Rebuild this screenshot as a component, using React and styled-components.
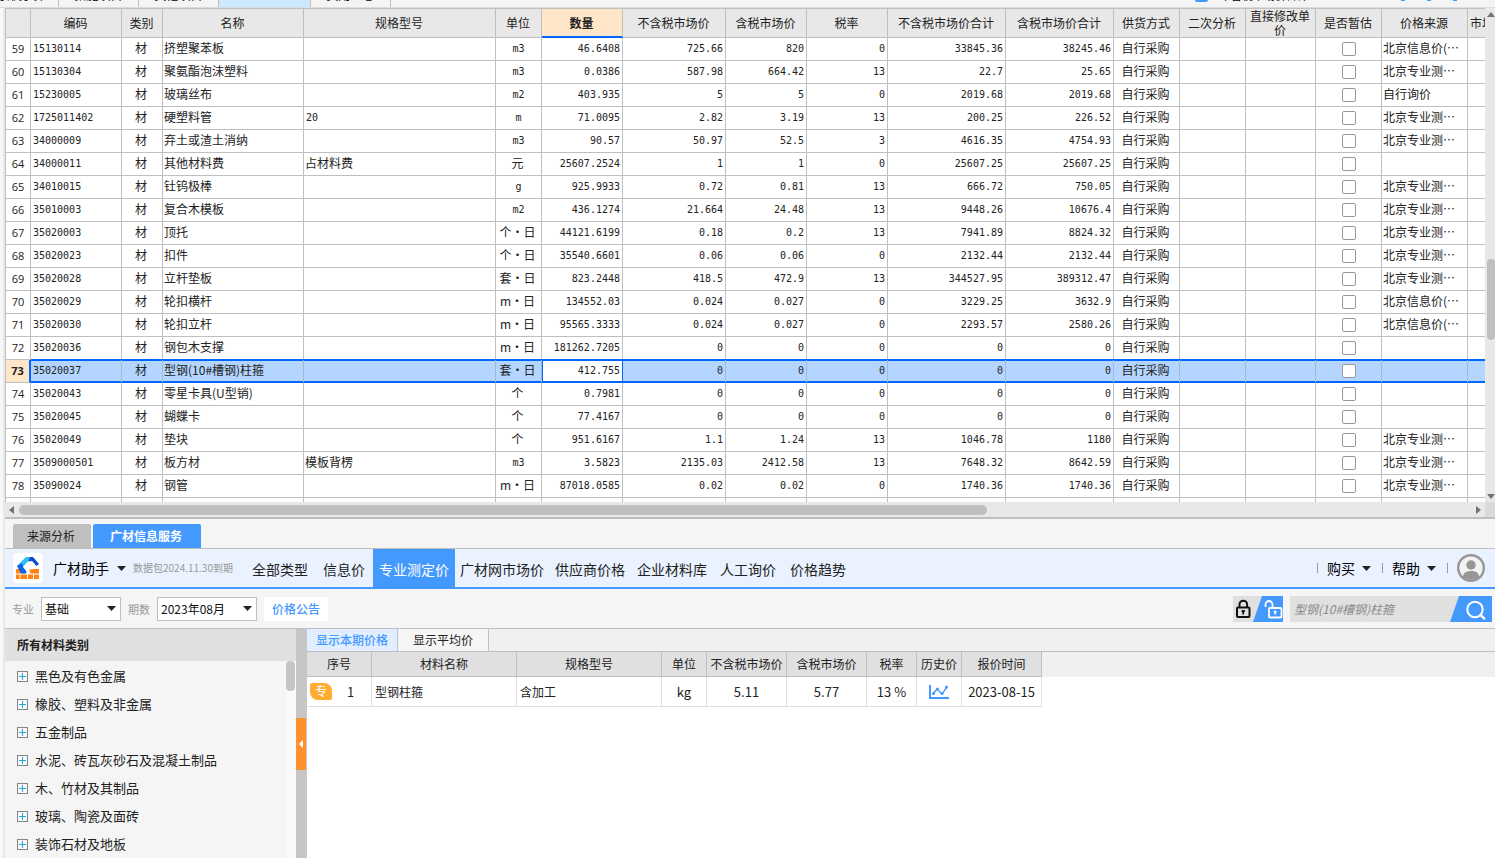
import { useState } from "react";
import styled, { createGlobalStyle, css } from "styled-components";

const BUY = "自行采购";
const PRO = "北京专业测…";
const INFO = "北京信息价(…";

const columns = [
  { title: "", width: 26 },
  { title: "编码", width: 91 },
  { title: "类别", width: 41 },
  { title: "名称", width: 141 },
  { title: "规格型号", width: 192 },
  { title: "单位", width: 46 },
  { title: "数量", width: 81 },
  { title: "不含税市场价", width: 103 },
  { title: "含税市场价", width: 81 },
  { title: "税率", width: 81 },
  { title: "不含税市场价合计", width: 118 },
  { title: "含税市场价合计", width: 108 },
  { title: "供货方式", width: 66 },
  { title: "二次分析", width: 66 },
  { title: "直接修改单价", width: 70 },
  { title: "是否暂估", width: 66 },
  { title: "价格来源", width: 86 },
  { title: "市场价", width: null },
];

// no, code, name, spec, unit, qty, price, price with tax, rate, total, total with tax, source
const rows = [
  [59, "15130114", "挤塑聚苯板", "", "m3", "46.6408", "725.66", "820", "0", "33845.36", "38245.46", INFO],
  [60, "15130304", "聚氨酯泡沫塑料", "", "m3", "0.0386", "587.98", "664.42", "13", "22.7", "25.65", PRO],
  [61, "15230005", "玻璃丝布", "", "m2", "403.935", "5", "5", "0", "2019.68", "2019.68", "自行询价"],
  [62, "1725011402", "硬塑料管", "20", "m", "71.0095", "2.82", "3.19", "13", "200.25", "226.52", PRO],
  [63, "34000009", "弃土或渣土消纳", "", "m3", "90.57", "50.97", "52.5", "3", "4616.35", "4754.93", PRO],
  [64, "34000011", "其他材料费", "占材料费", "元", "25607.2524", "1", "1", "0", "25607.25", "25607.25", ""],
  [65, "34010015", "钍钨极棒", "", "g", "925.9933", "0.72", "0.81", "13", "666.72", "750.05", PRO],
  [66, "35010003", "复合木模板", "", "m2", "436.1274", "21.664", "24.48", "13", "9448.26", "10676.4", PRO],
  [67, "35020003", "顶托", "", "个·日", "44121.6199", "0.18", "0.2", "13", "7941.89", "8824.32", PRO],
  [68, "35020023", "扣件", "", "个·日", "35540.6601", "0.06", "0.06", "0", "2132.44", "2132.44", PRO],
  [69, "35020028", "立杆垫板", "", "套·日", "823.2448", "418.5", "472.9", "13", "344527.95", "389312.47", PRO],
  [70, "35020029", "轮扣横杆", "", "m·日", "134552.03", "0.024", "0.027", "0", "3229.25", "3632.9", INFO],
  [71, "35020030", "轮扣立杆", "", "m·日", "95565.3333", "0.024", "0.027", "0", "2293.57", "2580.26", INFO],
  [72, "35020036", "钢包木支撑", "", "m·日", "181262.7205", "0", "0", "0", "0", "0", ""],
  [73, "35020037", "型钢(10#槽钢)柱箍", "", "套·日", "412.755", "0", "0", "0", "0", "0", ""],
  [74, "35020043", "零星卡具(U型销)", "", "个", "0.7981", "0", "0", "0", "0", "0", ""],
  [75, "35020045", "蝴蝶卡", "", "个", "77.4167", "0", "0", "0", "0", "0", ""],
  [76, "35020049", "垫块", "", "个", "951.6167", "1.1", "1.24", "13", "1046.78", "1180", PRO],
  [77, "3509000501", "板方材", "模板背楞", "m3", "3.5823", "2135.03", "2412.58", "13", "7648.32", "8642.59", PRO],
  [78, "35090024", "钢管", "", "m·日", "87018.0585", "0.02", "0.02", "0", "1740.36", "1740.36", PRO],
];

const topTabs = [
  { text: "分部分项", width: 80 },
  { text: "措施项目", width: 80 },
  { text: "其他项目", width: 80 },
  { text: "", width: 92, active: true },
  { text: "费用汇总", width: 80 },
];

const navItems = [
  { text: "全部类型", width: 70 },
  { text: "信息价", width: 58 },
  { text: "专业测定价", width: 82 },
  { text: "广材网市场价", width: 94 },
  { text: "供应商价格", width: 82 },
  { text: "企业材料库", width: 82 },
  { text: "人工询价", width: 70 },
  { text: "价格趋势", width: 70 },
];

const categories = [
  "黑色及有色金属",
  "橡胶、塑料及非金属",
  "五金制品",
  "水泥、砖瓦灰砂石及混凝土制品",
  "木、竹材及其制品",
  "玻璃、陶瓷及面砖",
  "装饰石材及地板",
];

const priceColumns = [
  ["序号", 65],
  ["材料名称", 145],
  ["规格型号", 145],
  ["单位", 45],
  ["不含税市场价", 80],
  ["含税市场价", 80],
  ["税率", 50],
  ["历史价", 45],
  ["报价时间", 80],
];

const Caret = () => (
  <svg width="9" height="5" viewBox="0 0 9 5">
    <path d="M0 0h9L4.5 5z" fill="#222" />
  </svg>
);

const Logo = () => (
  <svg width="30" height="30" viewBox="0 0 30 30">
    <rect width="30" height="30" rx="4" fill="#fff" />
    <g fill="#ff8412">
      <path d="M3 16h6v4.500H3zM20 16l-3 4.500h9V16z" />
      <path d="M10 18l4 2.500h-4zM14.500 16h5l-2.500 4z" />
      <path d="M3 21.500h3.500V26H3zM7.500 21.500h6.500V26H7.500zM15 21.500h5V26h-5zM21 21.500h5V26h-5z" />
    </g>
    <path d="M13 4h6l-8 9-3 2-4-2z" fill="#2bbdf7" />
    <path d="M4 13l5-3 1 4 4 5-2 1.500H8z" fill="#0b63e8" />
    <path d="M17 4h3l6 7-2.500 2L19 8l-4 1z" fill="#0a4dc8" />
    <path d="M10.500 13.500L15 8.500h3.500l3 4.500-5 6h-2.500z" fill="#fff" />
    <path d="M16 16.500h5l-3 3.500z" fill="#ff8412" />
  </svg>
);

const Avatar = () => (
  <svg width="28" height="28" viewBox="0 0 28 28">
    <circle cx="14" cy="14" r="12.800" fill="#f3f3f3" stroke="#979797" strokeWidth="2.400" />
    <circle cx="14" cy="11" r="4.700" fill="#979797" />
    <path d="M6 23c0-4 3-6 8-6s8 2 8 6c-4 4-12 4-16 0z" fill="#979797" />
  </svg>
);

const Locks = () => (
  <svg width="50" height="26" viewBox="0 0 50 26">
    <path d="M29 0h21v26H20z" fill="#4499ff" />
    <path d="M6.500 12V8.500a3.800 3.800 0 0 1 7.600 0V12" fill="none" stroke="#111" strokeWidth="2" />
    <rect x="4" y="11.500" width="12.500" height="9.500" rx="1" fill="none" stroke="#111" strokeWidth="2" />
    <path d="M10.200 14v4.500M8.500 15.200h3.500" stroke="#111" strokeWidth="1.800" />
    <path d="M32.500 11V8.500a3.500 3.500 0 0 1 7 0V12" fill="none" stroke="#fff" strokeWidth="1.800" />
    <rect x="36" y="12" width="12.500" height="9.500" rx="1" fill="none" stroke="#fff" strokeWidth="1.800" />
    <path d="M42.200 14.500v4M40.700 15.800h3" stroke="#fff" strokeWidth="1.600" />
  </svg>
);

const SearchIcon = () => (
  <svg width="42" height="26" viewBox="0 0 42 26">
    <path d="M9 0h33v26H0z" fill="#4499ff" />
    <circle cx="25" cy="13.500" r="7.700" fill="none" stroke="#fff" strokeWidth="2" />
    <path d="M30.500 19l3.800 3.500" stroke="#fff" strokeWidth="2.400" strokeLinecap="round" />
  </svg>
);

const ChartIcon = () => (
  <svg width="20" height="14" viewBox="0 0 20 14">
    <path d="M1 0v13h19" fill="none" stroke="#4499ff" strokeWidth="2" />
    <path d="M4 9l4-5 5 5 5-7" fill="none" stroke="#4499ff" strokeWidth="1.400" />
    <g fill="#4499ff">
      <circle cx="4.500" cy="8.500" r="1.500" />
      <circle cx="8.500" cy="4" r="1.500" />
      <circle cx="13" cy="8.500" r="1.500" />
      <circle cx="17.500" cy="2" r="1.500" />
    </g>
  </svg>
);

const PlusBox = () => (
  <svg width="11" height="11" viewBox="0 0 11 11">
    <rect x="0.500" y="0.500" width="10" height="10" fill="#fafafa" stroke="#858585" />
    <path d="M2 5.500h7M5.500 2v7" stroke="#25a5d8" />
  </svg>
);

const App = () => {
  const [selected, setSelected] = useState(73);
  const [nav, setNav] = useState("专业测定价");

  return (
    <Page>
      <GlobalStyle />
      <TopStrip>
        {topTabs.map((t, i) => (
          <TopTab key={i} $width={t.width} $active={t.active}>
            {t.text}
          </TopTab>
        ))}
        <TopTools>
          <TopCheck />
          不含税市场价合计:
          <TopMarks>
            <TopMark />
            <TopMark />
            <TopMark />
          </TopMarks>
        </TopTools>
      </TopStrip>

      <Grid>
        <GridScroll>
          <Sheet>
            <colgroup>
              {columns.map((c, i) => (
                <col key={i} width={c.width || undefined} />
              ))}
            </colgroup>
            <thead>
              <tr>
                {columns.map((c, i) => (
                  <HeadCell key={i} $active={c.title === "数量"} $clip={!c.width}>
                    {c.title}
                  </HeadCell>
                ))}
              </tr>
            </thead>
            <tbody>
              {rows.map((r) => (
                <Row key={r[0]} $selected={r[0] === selected} onClick={() => setSelected(r[0])}>
                  <NumberCell>{r[0]}</NumberCell>
                  <Cell $mono>{r[1]}</Cell>
                  <Cell $align="center">材</Cell>
                  <Cell>{r[2]}</Cell>
                  <Cell $mono={r[3] === "20"}>{r[3]}</Cell>
                  <Cell $align="center" $mono={/^[a-z0-9]+$/.test(r[4])}>{r[4]}</Cell>
                  <QtyCell $mono $align="right">{r[5]}</QtyCell>
                  <Cell $mono $align="right">{r[6]}</Cell>
                  <Cell $mono $align="right">{r[7]}</Cell>
                  <Cell $mono $align="right">{r[8]}</Cell>
                  <Cell $mono $align="right">{r[9]}</Cell>
                  <Cell $mono $align="right">{r[10]}</Cell>
                  <Cell $align="center">{BUY}</Cell>
                  <Cell />
                  <Cell />
                  <Cell $mono $align="center">
                    <Check type="checkbox" aria-label="是否暂估" />
                  </Cell>
                  <Cell>{r[11]}</Cell>
                  <Cell />
                </Row>
              ))}
              <tr>
                {columns.map((c, i) => (
                  <StubCell key={i} />
                ))}
              </tr>
            </tbody>
          </Sheet>
        </GridScroll>
        <VBar>
          <svg width="8" height="5" viewBox="0 0 8 5"><path d="M0 5h8L4 0z" fill="#6f7278" /></svg>
          <VTrack><VThumb /></VTrack>
          <svg width="8" height="5" viewBox="0 0 8 5"><path d="M0 0h8L4 5z" fill="#6f7278" /></svg>
        </VBar>
      </Grid>
      <HBar>
        <HTrack>
          <svg width="5" height="8" viewBox="0 0 5 8"><path d="M5 0v8L0 4z" fill="#6f7278" /></svg>
          <HRail><HThumb /></HRail>
          <svg width="5" height="8" viewBox="0 0 5 8"><path d="M0 0v8l5-4z" fill="#6f7278" /></svg>
        </HTrack>
        <Corner />
      </HBar>

      <ServiceTabs>
        <ServiceTab $width={78}>来源分析</ServiceTab>
        <ServiceTab $width={108} $active>广材信息服务</ServiceTab>
      </ServiceTabs>

      <NavBar>
        <Logo />
        <Brand>
          广材助手
          <Caret />
        </Brand>
        <Expiry>数据包2024.11.30到期</Expiry>
        <NavList>
          {navItems.map((n) => (
            <NavItem
              key={n.text}
              $width={n.width}
              $active={n.text === nav}
              onClick={() => setNav(n.text)}
            >
              {n.text}
            </NavItem>
          ))}
        </NavList>
        <UserArea>
          <Divider />
          <MenuButton>购买 <Caret /></MenuButton>
          <Divider />
          <MenuButton>帮助 <Caret /></MenuButton>
          <Divider />
          <AvatarButton aria-label="用户"><Avatar /></AvatarButton>
        </UserArea>
      </NavBar>

      <Filters>
        <Label htmlFor="major">专业</Label>
        <SelectBox $width={80}>
          <Select id="major">
            <option>基础</option>
          </Select>
          <Caret />
        </SelectBox>
        <Label htmlFor="period">期数</Label>
        <SelectBox $width={100}>
          <Select id="period">
            <option>2023年08月</option>
          </Select>
          <Caret />
        </SelectBox>
        <NoticeButton>价格公告</NoticeButton>
        <LockButton aria-label="锁定"><Locks /></LockButton>
        <SearchBox>
          <SearchInput aria-label="搜索" placeholder="型钢(10#槽钢)柱箍" />
          <SearchButton aria-label="搜索"><SearchIcon /></SearchButton>
        </SearchBox>
      </Filters>

      <Bottom>
        <Side>
          <SideTitle>所有材料类别</SideTitle>
          <TreeArea>
            <Tree>
              {categories.map((c) => (
                <TreeItem key={c}>
                  <PlusBox />
                  {c}
                </TreeItem>
              ))}
            </Tree>
            <TreeBar><TreeThumb /></TreeBar>
          </TreeArea>
        </Side>
        <Splitter>
          <Collapse aria-label="收起">
            <svg width="4" height="8" viewBox="0 0 4 8"><path d="M4 0v8L0 4z" fill="#fff" /></svg>
          </Collapse>
        </Splitter>
        <Main>
          <PriceTabs>
            <PriceTab $active>显示本期价格</PriceTab>
            <PriceTab>显示平均价</PriceTab>
          </PriceTabs>
          <PriceArea>
            <PriceTable>
              <colgroup>
                {priceColumns.map(([title, width]) => (
                  <col key={title} width={width} />
                ))}
              </colgroup>
              <thead>
                <tr>
                  {priceColumns.map(([title]) => (
                    <PriceHead key={title}>{title}</PriceHead>
                  ))}
                </tr>
              </thead>
              <tbody>
                <tr>
                  <PriceCell>
                    <Serial>
                      <Badge>专</Badge>1
                    </Serial>
                  </PriceCell>
                  <PriceCell $left>型钢柱箍</PriceCell>
                  <PriceCell $left>含加工</PriceCell>
                  <PriceCell>kg</PriceCell>
                  <PriceCell>5.11</PriceCell>
                  <PriceCell>5.77</PriceCell>
                  <PriceCell>13 %</PriceCell>
                  <PriceCell><ChartIcon /></PriceCell>
                  <PriceCell>2023-08-15</PriceCell>
                </tr>
              </tbody>
            </PriceTable>
          </PriceArea>
        </Main>
      </Bottom>
    </Page>
  );
};

const GlobalStyle = createGlobalStyle`
  * { box-sizing: border-box; }
  body {
    margin: 0;
    background: #f5f5f5;
    color: #222;
    font: 12px/16px "Noto Sans CJK SC", sans-serif;
  }
  button, input, select {
    font: inherit;
    color: inherit;
    margin: 0;
    padding: 0;
    border: none;
    background: none;
  }
  svg { display: block; flex: none; }
`;

const Page = styled.div`
  height: 100vh;
  display: flex;
  flex-direction: column;
  overflow: hidden;
  padding-left: 5px;
  background: linear-gradient(to right, #f8f8f8 3px, #e9e9e9 3px, #e9e9e9 5px, #f5f5f5 5px);
`;
const TopStrip = styled.div`
  flex: none;
  display: flex;
  height: 8px;
  margin-left: -26px;
  overflow: hidden;
  background: #f4f4f4;
  border-bottom: 1px solid #dcdcdc;
  color: #000;
`;
const TopTab = styled.div`
  flex: none;
  display: flex;
  align-items: flex-end;
  justify-content: center;
  width: ${(p) => p.$width}px;
  padding-bottom: 5px;
  line-height: 14px;
  background: ${(p) => (p.$active ? "#cce8ff" : "transparent")};
  border-right: 1px solid #bfbfbf;
`;
const TopTools = styled.div`
  display: flex;
  align-items: flex-end;
  gap: 12px;
  margin-left: auto;
  padding: 0 38px 5px 0;
  font-size: 11px;
  line-height: 14px;
`;
const TopCheck = styled.span`
  width: 13px;
  height: 13px;
  border-radius: 2px;
  background: #4499ff;
`;
const TopMarks = styled.span`
  display: flex;
  gap: 22px;
  margin-left: 78px;
`;
const TopMark = styled.span`
  width: 4px;
  height: 4px;
  margin-bottom: 1px;
  background: #4499ff;
`;

const Grid = styled.div`
  flex: none;
  display: flex;
`;
const GridScroll = styled.div`
  flex: 1;
  min-width: 0;
  overflow: hidden;
`;
const Sheet = styled.table`
  width: 100%;
  table-layout: fixed;
  border-collapse: separate;
  border-spacing: 0;
  background: #fff;
  border-top: 1px solid #bfbfbf;
`;
const HeadCell = styled.th`
  height: 29px;
  padding: 0 4px 0 3px;
  overflow: hidden;
  background: #e8e8e8;
  border-right: 1px solid #bfbfbf;
  border-bottom: 1px solid #bfbfbf;
  font-weight: normal;
  line-height: 14px;
  &:first-child {
    border-left: 1px solid #bfbfbf;
  }
  ${(p) =>
    p.$active &&
    css`
      background: #ffe6c8;
      border-bottom: 2px solid #0066ff;
      font-weight: bold;
    `}
  ${(p) =>
    p.$clip &&
    css`
      padding: 0 0 0 2px;
      border-right: none;
      text-align: left;
      white-space: nowrap;
    `}
`;
const Cell = styled.td`
  height: 23px;
  padding: 0 3px 2px 1px;
  overflow: hidden;
  border-right: 1px solid #bfbfbf;
  border-bottom: 1px solid #bfbfbf;
  text-align: ${(p) => p.$align || "left"};
  white-space: nowrap;
  &:last-child {
    border-right: none;
  }
  ${(p) =>
    p.$mono &&
    css`
      padding: 0 2px;
      font-family: "DejaVu Sans Mono", monospace;
      font-size: 10px;
    `}
`;
const QtyCell = styled(Cell)``;
const NumberCell = styled(Cell)`
  padding: 0;
  border-left: 1px solid #bfbfbf;
  font-family: "Open Sans", sans-serif;
  font-size: 11px;
  text-align: center;
`;
const Row = styled.tr`
  ${(p) =>
    p.$selected &&
    css`
      ${Cell} {
        background: #b3d5ff;
        border-right-color: #a3b9d0;
        border-bottom-color: #0066ff;
        box-shadow: 0 -1px #0066ff, inset 0 1px #0066ff, inset 0 -1px #0066ff;
      }
      ${QtyCell} {
        background: #fff;
        border-right-color: #0066ff;
        box-shadow: 0 -1px #0066ff, inset 0 1px #0066ff, inset 0 -1px #0066ff, inset 1px 0 #0066ff;
      }
      ${NumberCell} {
        background: #ffe6c8;
        border-right: 2px solid #0066ff;
        border-bottom-color: #bfbfbf;
        box-shadow: none;
        font-weight: bold;
      }
    `}
`;
const StubCell = styled.td`
  height: 4px;
  padding: 0;
  border-right: 1px solid #bfbfbf;
  &:first-child {
    border-left: 1px solid #bfbfbf;
  }
  &:last-child {
    border-right: none;
  }
`;
const Check = styled.input`
  appearance: none;
  display: block;
  width: 14px;
  height: 14px;
  && {
    margin: 0 auto;
    border: 1px solid #999;
    border-radius: 2px;
    background: #fff;
  }
`;
const VBar = styled.div`
  flex: none;
  display: flex;
  flex-direction: column;
  align-items: flex-end;
  width: 10px;
  padding: 4px 0 3px;
  background: #e8e8e8;
`;
const VTrack = styled.div`
  flex: 1;
  display: flex;
  flex-direction: column;
  width: 8px;
`;
const VThumb = styled.div`
  flex: 0 0 17%;
  margin-top: 242px;
  border-radius: 4px;
  background: #bfbfbf;
`;
const HBar = styled.div`
  flex: none;
  display: flex;
  height: 17px;
  border-bottom: 2px solid #bfbfbf;
`;
const HTrack = styled.div`
  flex: 1;
  display: flex;
  align-items: center;
  gap: 5px;
  padding: 0 4px;
  background: #e8e8e8;
`;
const HRail = styled.div`
  flex: 1;
`;
const HThumb = styled.div`
  width: calc(67% - 5px);
  height: 10px;
  border-radius: 5px;
  background: #bfbfbf;
`;
const Corner = styled.div`
  width: 10px;
  background: #dadada;
`;

const ServiceTabs = styled.div`
  flex: none;
  display: flex;
  gap: 2px;
  padding: 5px 8px 0;
  border-bottom: 1px solid #bfbfbf;
`;
const ServiceTab = styled.button`
  width: ${(p) => p.$width}px;
  height: 24px;
  && {
    padding-right: 2px;
    border-radius: 2px 2px 0 0;
    background: ${(p) => (p.$active ? "#4499ff" : "#bfbfbf")};
    color: ${(p) => (p.$active ? "#fff" : "#222")};
    font-weight: ${(p) => (p.$active ? "bold" : "normal")};
  }
`;
const NavBar = styled.div`
  flex: none;
  display: flex;
  align-items: center;
  height: 40px;
  padding: 0 10px 0 8px;
  background: #eaf1ff;
  border-bottom: 2px solid #4499ff;
  font-size: 14px;
`;
const Brand = styled.div`
  display: flex;
  align-items: center;
  gap: 8px;
  margin-left: 10px;
  color: #000;
`;
const Expiry = styled.span`
  width: 112px;
  margin-left: 7px;
  color: #999;
  font-size: 10px;
  white-space: nowrap;
`;
const NavList = styled.nav`
  display: flex;
  align-self: stretch;
`;
const NavItem = styled.button`
  width: ${(p) => p.$width}px;
  white-space: nowrap;
  && {
    padding-top: 1px;
    background: ${(p) => (p.$active ? "#4499ff" : "transparent")};
    color: ${(p) => (p.$active ? "#fff" : "#222")};
  }
`;
const UserArea = styled.div`
  display: flex;
  align-items: center;
  margin-left: auto;
`;
const Divider = styled.span`
  width: 1px;
  height: 10px;
  background: #999;
`;
const MenuButton = styled.button`
  display: flex;
  align-items: center;
  gap: 7px;
  && {
    padding: 0 11px 0 9px;
    color: #000;
  }
`;
const AvatarButton = styled.button`
  && {
    margin-left: 9px;
  }
`;

const Filters = styled.div`
  flex: none;
  display: flex;
  align-items: center;
  gap: 7px;
  height: 40px;
  padding: 0 3px 0 7px;
  border-bottom: 1px solid #bfbfbf;
`;
const Label = styled.label`
  color: #999;
  font-size: 11px;
`;
const SelectBox = styled.div`
  position: relative;
  width: ${(p) => p.$width}px;
  height: 24px;
  svg {
    position: absolute;
    right: 5px;
    top: 9px;
    pointer-events: none;
  }
`;
const Select = styled.select`
  appearance: none;
  width: 100%;
  height: 100%;
  && {
    padding-left: 3px;
    border: 1px solid #bfbfbf;
    background: #fff;
    color: #111;
  }
`;
const NoticeButton = styled.button`
  height: 24px;
  && {
    padding: 0 8px;
    background: #fff;
    color: #4499ff;
    font-weight: 500;
  }
`;
const LockButton = styled.button`
  && {
    margin-left: auto;
    background: #e0e0e0;
  }
`;
const SearchBox = styled.div`
  display: flex;
  width: 202px;
  height: 26px;
  background: #e0e0e0;
`;
const SearchInput = styled.input`
  flex: 1;
  min-width: 0;
  && {
    padding-left: 4px;
  }
  &::placeholder {
    color: #8c8c8c;
    font-style: italic;
    opacity: 1;
  }
`;
const SearchButton = styled.button``;

const Bottom = styled.div`
  flex: 1;
  min-height: 0;
  display: flex;
`;
const Side = styled.aside`
  flex: none;
  display: flex;
  flex-direction: column;
  width: 291px;
`;
const SideTitle = styled.div`
  flex: none;
  padding: 8px 12px;
  background: #e0e0e0;
  font-weight: bold;
`;
const TreeArea = styled.div`
  flex: 1;
  min-height: 0;
  display: flex;
`;
const Tree = styled.ul`
  flex: 1;
  margin: 0;
  padding: 1px 0 0 12px;
  overflow: hidden;
  list-style: none;
  font-size: 13px;
`;
const TreeItem = styled.li`
  display: flex;
  align-items: center;
  gap: 7px;
  height: 28px;
`;
const TreeBar = styled.div`
  width: 10px;
  background: #fafafa;
`;
const TreeThumb = styled.div`
  width: 9px;
  height: 30px;
  border-radius: 4px;
  background: #c6c6c6;
`;
const Splitter = styled.div`
  flex: none;
  display: flex;
  width: 11px;
  padding-top: 89px;
  background: #c8c6c4;
`;
const Collapse = styled.button`
  width: 10px;
  height: 52px;
  && {
    padding-left: 3px;
    background: #ff9030;
  }
`;
const Main = styled.main`
  flex: 1;
  min-width: 0;
  background: #fff;
`;
const PriceTabs = styled.div`
  display: flex;
  height: 23px;
  background: #f0f0f0;
  border-bottom: 1px solid #bfbfbf;
`;
const PriceTab = styled.button`
  width: 91px;
  && {
    border-right: 1px solid #bfbfbf;
    background: ${(p) => (p.$active ? "#e0eeff" : "#f5f5f5")};
    color: ${(p) => (p.$active ? "#4499ff" : "#222")};
    font-weight: ${(p) => (p.$active ? 500 : "normal")};
  }
`;
const PriceArea = styled.div`
  background: linear-gradient(to bottom, #f0f0f0 25px, #fff 25px);
`;
const PriceTable = styled.table`
  width: 735px;
  table-layout: fixed;
  border-collapse: separate;
  border-spacing: 0;
`;
const PriceHead = styled.th`
  height: 25px;
  padding: 0;
  background: #e0e0e0;
  border-right: 1px solid #bfbfbf;
  border-bottom: 1px solid #bfbfbf;
  font-weight: normal;
  white-space: nowrap;
`;
const PriceCell = styled.td`
  height: 30px;
  padding: 0 3px;
  border-right: 1px solid #e0e0e0;
  border-bottom: 1px solid #e0e0e0;
  font-size: ${(p) => (p.$left ? 12 : 13)}px;
  text-align: ${(p) => (p.$left ? "left" : "center")};
  white-space: nowrap;
  svg {
    margin: 0 auto;
  }
`;
const Serial = styled.div`
  display: flex;
  align-items: center;
  gap: 15px;
`;
const Badge = styled.span`
  width: 22px;
  height: 17px;
  border-radius: 2px 8px 2px 8px;
  background: #ffac33;
  color: #fff;
  font-size: 12px;
  line-height: 16px;
  text-align: center;
`;

export default App;
